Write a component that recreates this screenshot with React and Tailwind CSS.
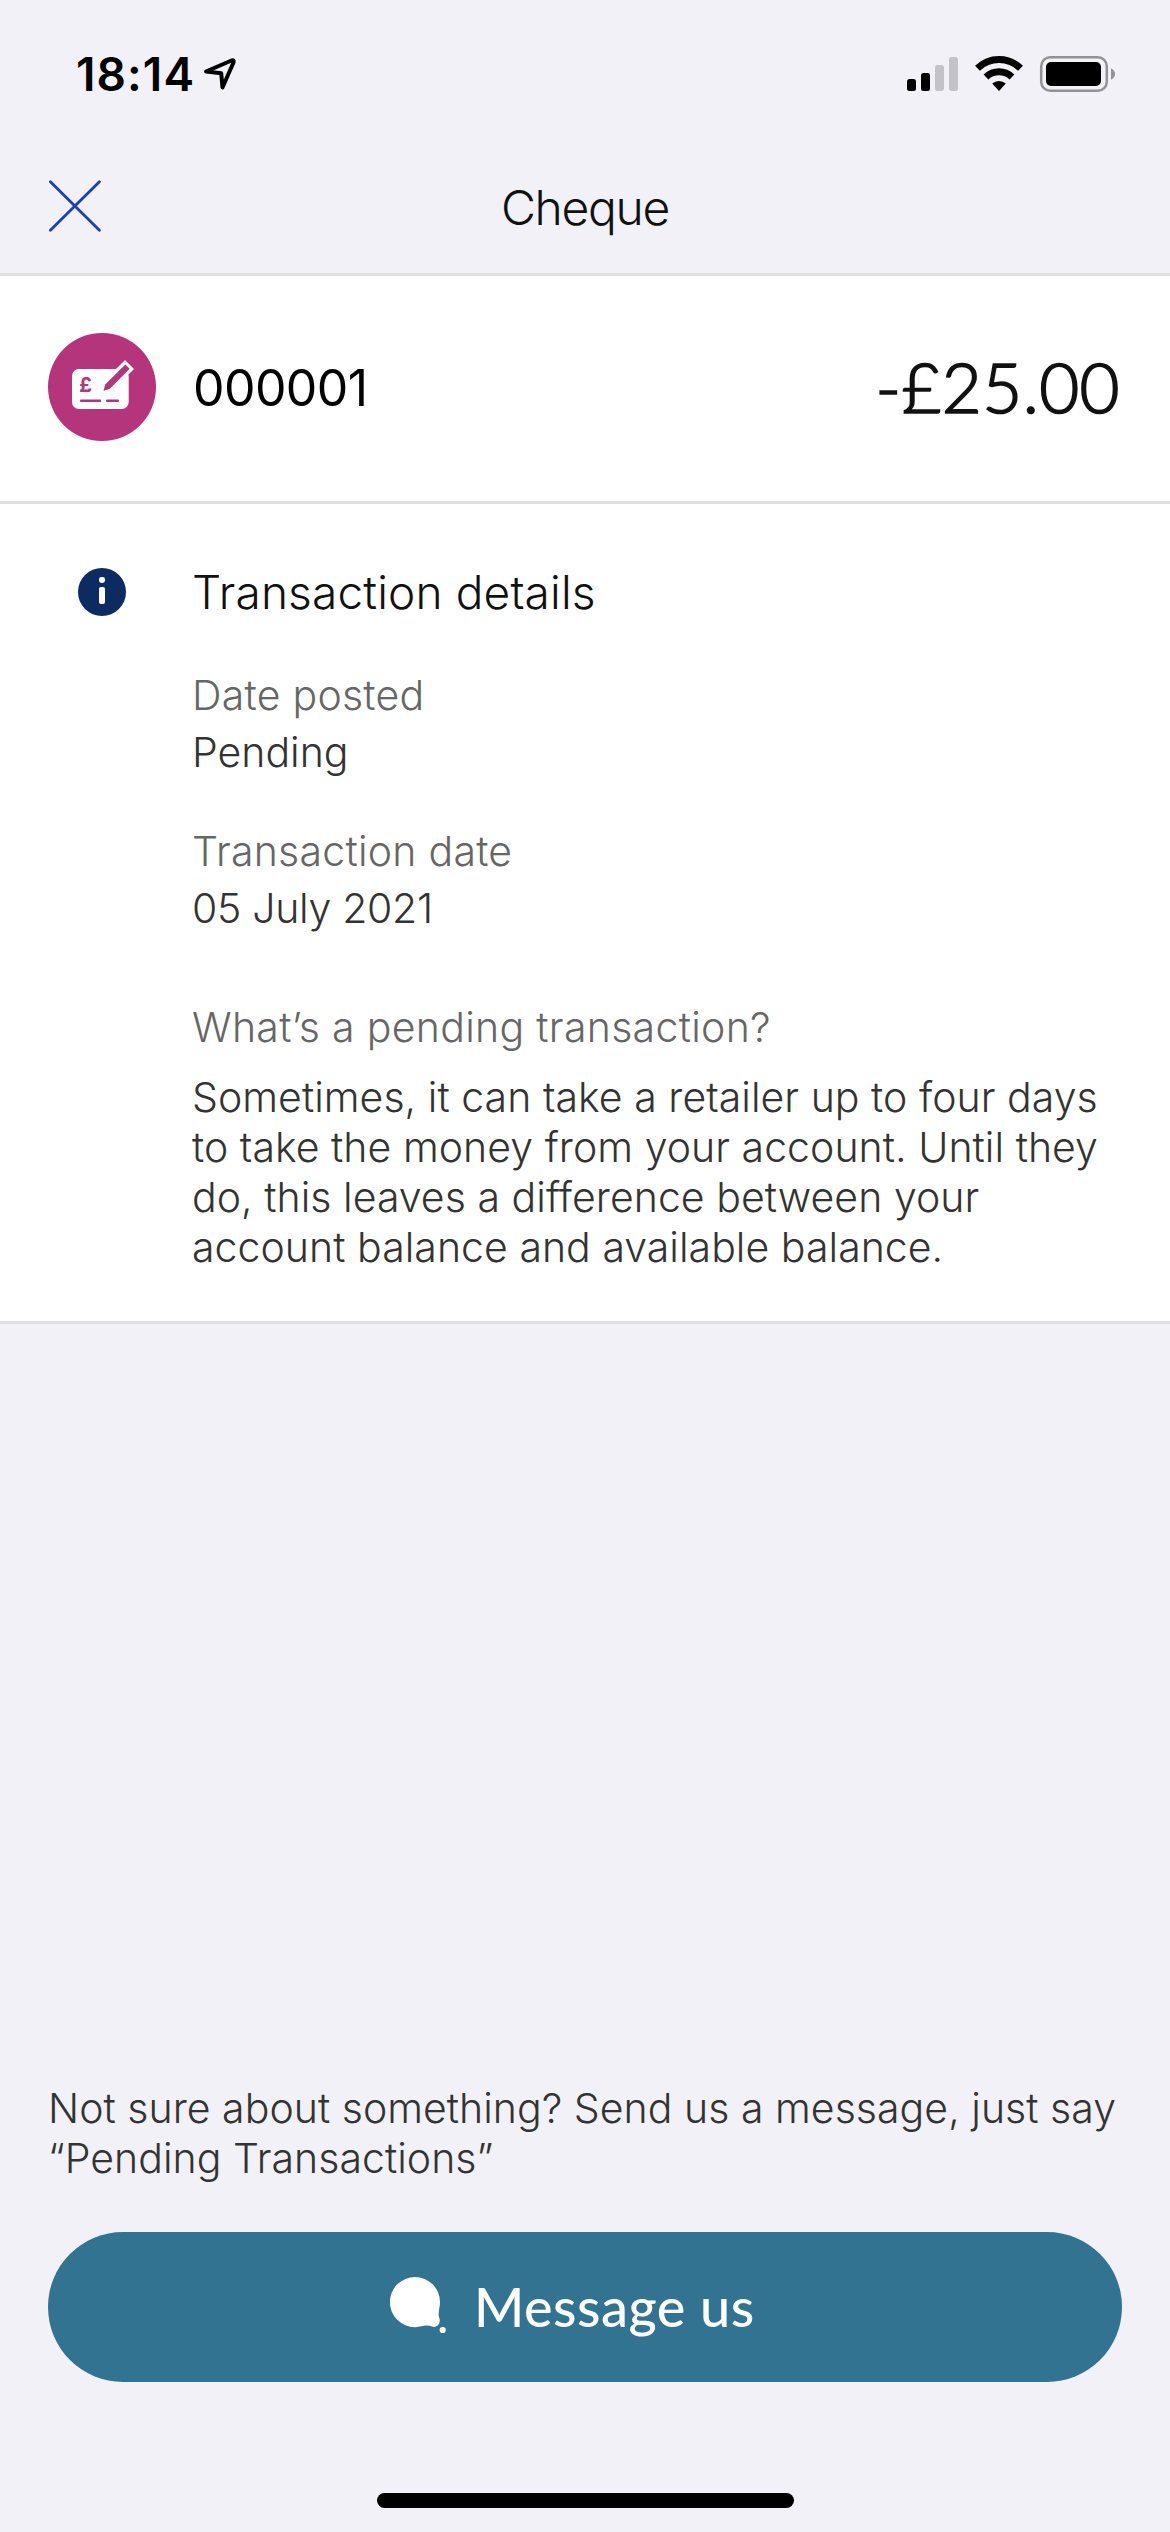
const BODY = 'text-[41px] leading-[50px] font-light text-[#333333]';

const details = [
  { label: 'Date posted', value: 'Pending' },
  { label: 'Transaction date', value: '05 July 2021', tracking: 'tracking-[-0.3px]' },
];

export default function App() {
  return (
    <div className="flex h-[2532px] w-[1170px] flex-col bg-[#f2f1f7] font-['Inter',sans-serif]">
      <StatusBar />

      {/* Title bar */}
      <header className="grid h-[126px] grid-cols-[120px_1fr_120px] border-b-[3px] border-[#dfdfdf]">
        <button className="flex pt-[28px] pl-[48px]" aria-label="Close">
          <CloseIcon />
        </button>
        <h1 className="pt-[28px] text-center text-[48px] leading-[60px] font-light tracking-[-1.3px] text-[#111111]">
          Cheque
        </h1>
      </header>

      {/* Amount */}
      <section className="flex h-[228px] items-start border-b-[3px] border-[#dfdfdf] bg-white pr-[50px] pl-[48px]">
        <ChequeIcon />
        <p className="mt-[80px] ml-[37px] text-[50px] leading-[64px] tracking-[-0.6px] text-black">000001</p>
        <p className="mt-[69px] ml-auto font-['Lato',sans-serif] text-[69px] leading-[84px] font-light tracking-[0.4px] text-[#111111] [-webkit-text-stroke:1.7px_#111111]">
          -£25.00
        </p>
      </section>

      {/* Details */}
      <section className="flex h-[820px] border-b-[3px] border-[#dfdfdf] bg-white">
        <div className="w-[192px] shrink-0 pt-[64px] pl-[78px]">
          <InfoIcon />
        </div>
        <div className="pt-[60px]">
          <h2 className="text-[46px] leading-[56px] font-light tracking-[0.15px] text-[#111111]">
            Transaction details
          </h2>
          <dl className="mt-[47px] flex flex-col gap-[42px]">
            {details.map((item) => (
              <div key={item.label} className="text-[41px] leading-[57px] font-light">
                <dt className="tracking-[0.25px] text-[#666666]">{item.label}</dt>
                <dd className={`text-[#333333] ${item.tracking || ''}`}>{item.value}</dd>
              </div>
            ))}
          </dl>
          <h3 className="mt-[65px] text-[41px] leading-[50px] font-light tracking-[0.3px] text-[#666666]">
            What’s a pending transaction?
          </h3>
          <p className={`${BODY} mt-[20px] tracking-[0.04px] whitespace-nowrap`}>
            Sometimes, it can take a retailer up to four days<br />
            to take the money from your account. Until they<br />
            do, this leaves a difference between your<br />
            account balance and available balance.
          </p>
        </div>
      </section>

      {/* Message prompt */}
      <footer className="mt-auto flex flex-col px-[48px] pb-[24px]">
        <p className={`${BODY} tracking-[0.03px] whitespace-nowrap`}>
          Not sure about something? Send us a message, just say<br />
          “Pending Transactions”
        </p>
        <button className="mt-[49px] flex h-[150px] items-start rounded-full bg-[#327391] pl-[342px] text-white">
          <ChatIcon />
          <span className="mt-[43px] ml-[28px] font-['Lato',sans-serif] text-[54px] leading-[64px] font-medium tracking-[0.5px]">
            Message us
          </span>
        </button>
        <div className="mx-auto mt-[111px] h-[15px] w-[417px] rounded-full bg-black" />
      </footer>
    </div>
  );
}

function StatusBar() {
  return (
    <div className="flex h-[150px] shrink-0 items-start pr-[54px] pl-[76px]">
      <span className="mt-[46px] text-[46px] leading-[56px] font-semibold tracking-[1.1px] text-black">18:14</span>
      <svg className="mt-[56px] ml-[8px]" width="34" height="36" viewBox="0 0 34 36" fill="none">
        <path
          d="M3 15.5 L28.5 4.5 Q31.5 3.5 30.5 6.5 L19.5 31.5 L18.2 17.2 Z"
          stroke="#000"
          strokeWidth="4"
          strokeLinejoin="round"
        />
      </svg>
      <svg className="mt-[50px] ml-auto" width="209" height="46" viewBox="907 50 209 46" fill="none">
        <rect x="907" y="79" width="9" height="12" rx="2.5" fill="#000" />
        <rect x="921" y="73" width="9" height="18" rx="2.5" fill="#000" />
        <rect x="935" y="65" width="9" height="26" rx="2.5" fill="#c3c2c7" />
        <rect x="949" y="57" width="9" height="34" rx="2.5" fill="#c3c2c7" />
        <path d="M977.5 68.2 A31 31 0 0 1 1020.5 68.2" stroke="#000" strokeWidth="7" />
        <path d="M986 77 A19 19 0 0 1 1012 77" stroke="#000" strokeWidth="7" />
        <path d="M992.2 83.6 A10 10 0 0 1 1005.8 83.6 L999 91 Z" fill="#000" />
        <rect x="1041.2" y="57.2" width="65.6" height="33.6" rx="9" stroke="#929296" strokeWidth="2.5" />
        <rect x="1046" y="62" width="55" height="24" rx="5" fill="#000" />
        <path d="M1111 68.3 Q1115 70.5 1115 74 Q1115 77.5 1111 79.7 Z" fill="#929296" />
      </svg>
    </div>
  );
}

function CloseIcon() {
  return (
    <svg width="54" height="54" viewBox="0 0 54 54" stroke="#173fbf" strokeWidth="2.8" strokeLinecap="round">
      <path d="M2.4 3.8 L51.4 52.3 M51.4 3.8 L2.4 52.3" />
    </svg>
  );
}

function ChequeIcon() {
  return (
    <svg className="mt-[57px] shrink-0" width="108" height="108" viewBox="0 0 108 108">
      <circle cx="54" cy="54" r="54" fill="#b5357c" />
      <rect x="24" y="36" width="56.7" height="40" rx="7" fill="#fff" />
      <path d="M66 38 L77 27 L86 36 L72 50 Z" fill="#fff" />
      <path d="M77.3 31.4 L81.7 35.8 L61.6 56 L55.5 57.8 L57.2 51.4 Z" fill="#b5357c" />
      <path d="M33.2 67.8 H52 M59.2 67.8 H69.8" stroke="#b5357c" strokeWidth="2.6" strokeLinecap="round" />
      <text x="31.2" y="59" fill="#b5357c" className="font-['Inter',sans-serif] text-[20px] font-bold">£</text>
    </svg>
  );
}

function InfoIcon() {
  return (
    <svg width="48" height="48" viewBox="0 0 48 48">
      <circle cx="24" cy="24" r="24" fill="#0d2b60" />
      <rect x="21" y="9" width="6" height="6" rx="2.4" fill="#fff" />
      <rect x="21" y="19" width="6" height="17" rx="2" fill="#fff" />
    </svg>
  );
}

function ChatIcon() {
  return (
    <svg className="mt-[45px]" width="56" height="57" viewBox="0 0 56 57" fill="#fff">
      <path d="M25 0 A25 25 0 0 1 50 25 C50 31 47.8 35 49 40 C51.5 46 47.5 51.3 42 49.6 C36.5 47 31 50.2 25 50.2 A25 25 0 0 1 25 0 Z" />
      <circle cx="52.7" cy="53" r="3.1" />
    </svg>
  );
}
